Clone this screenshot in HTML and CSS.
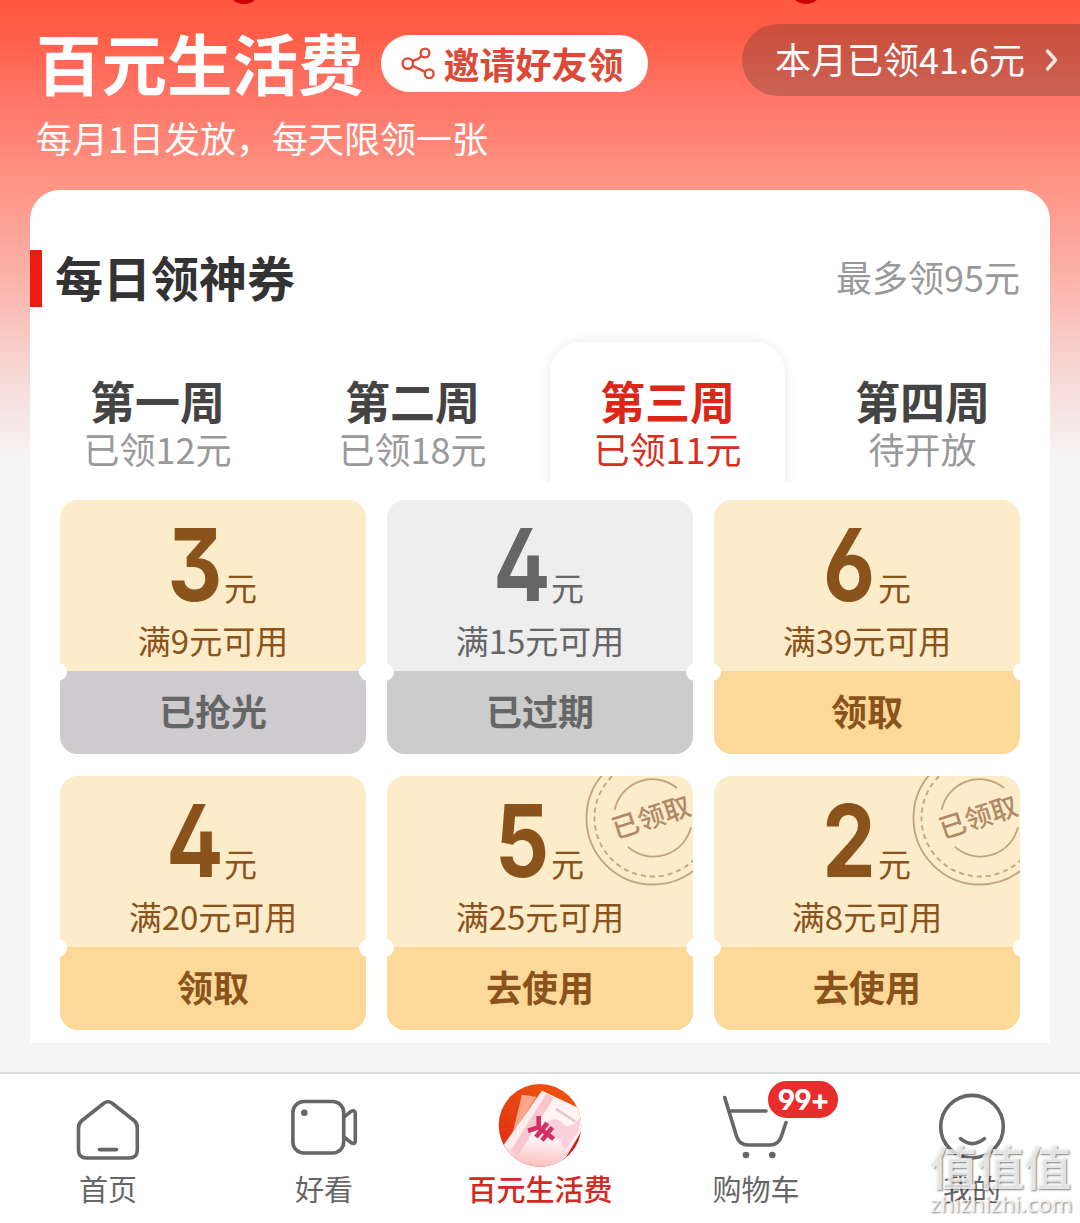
FILE: index.html
```html
<!DOCTYPE html>
<html lang="zh-CN">
<head>
<meta charset="utf-8">
<title>百元生活费</title>
<link rel="stylesheet" href="styles.css">
</head>
<body>
<svg class="defs" width="0" height="0" aria-hidden="true">
  <symbol id="stamp" viewBox="0 0 136 136">
    <g fill="none" stroke="#8a5a2e" stroke-opacity=".5" stroke-width="1.8">
      <circle cx="68" cy="68" r="66.5"/>
      <circle cx="68" cy="68" r="58.5" stroke-dasharray="5 4"/>
      <path d="M29.7 59.7A38.6 38.6 0 0 1 92 38"/>
      <path d="M42.7 96.7A38.6 38.6 0 0 0 106 77.3"/>
    </g>
  </symbol>
</svg>
<main class="page">
  <header class="hero">
    <span class="dot dot-left"></span>
    <span class="dot dot-right"></span>
    <div class="hero-main">
      <div class="hero-row">
        <h1 class="hero-title">百元生活费</h1>
        <a class="invite">
          <svg class="share" viewBox="0 0 34 32" width="34" height="32" fill="none" stroke="#dc4a37" stroke-width="2.4">
            <circle cx="6.8" cy="16.6" r="5.2"/><circle cx="24" cy="6" r="4.4"/><circle cx="28.2" cy="26.8" r="4.4"/>
            <path d="M11.8 13.9 17 12l4-3.4M11.8 18.8l12.4 6"/>
          </svg>
          <span>邀请好友领</span>
        </a>
      </div>
      <p class="hero-sub">每月1日发放，每天限领一张</p>
    </div>
    <a class="month">
      <span>本月已领41.6元</span>
      <svg viewBox="0 0 14 24" width="14" height="24" fill="none" stroke="#ffe9e4" stroke-width="3.4" stroke-linecap="round" stroke-linejoin="round"><path d="M2.5 3 10.5 12l-8 9"/></svg>
    </a>
  </header>

  <section class="card">
    <div class="card-head">
      <h2 class="card-title">每日领神券</h2>
      <span class="card-max">最多领95元</span>
    </div>
    <nav class="weeks">
      <a class="week"><b>第一周</b><span>已领12元</span></a>
      <a class="week"><b>第二周</b><span>已领18元</span></a>
      <a class="week active"><b>第三周</b><span>已领11元</span></a>
      <a class="week"><b>第四周</b><span>待开放</span></a>
    </nav>
    <div class="tickets">
      <article class="ticket soldout">
        <div class="face"><p class="amount"><b>3</b><span>元</span></p><p class="rule">满9元可用</p></div>
        <div class="action">已抢光</div>
      </article>
      <article class="ticket expired">
        <div class="face"><p class="amount"><b>4</b><span>元</span></p><p class="rule">满15元可用</p></div>
        <div class="action">已过期</div>
      </article>
      <article class="ticket">
        <div class="face"><p class="amount"><b>6</b><span>元</span></p><p class="rule">满39元可用</p></div>
        <div class="action">领取</div>
      </article>
      <article class="ticket">
        <div class="face"><p class="amount"><b>4</b><span>元</span></p><p class="rule">满20元可用</p></div>
        <div class="action">领取</div>
      </article>
      <article class="ticket">
        <div class="face"><p class="amount"><b>5</b><span>元</span></p><p class="rule">满25元可用</p></div>
        <div class="action">去使用</div>
        <div class="stamp"><svg width="136" height="136"><use href="#stamp"/></svg><span>已领取</span></div>
      </article>
      <article class="ticket">
        <div class="face"><p class="amount"><b>2</b><span>元</span></p><p class="rule">满8元可用</p></div>
        <div class="action">去使用</div>
        <div class="stamp"><svg width="136" height="136"><use href="#stamp"/></svg><span>已领取</span></div>
      </article>
    </div>
  </section>

  <nav class="tabbar">
    <a class="tab">
      <svg class="tab-icon" viewBox="0 0 120 84">
        <path d="M34 40.5 55.5 23.5Q60 20 64.500 23.500L86 40.500Q89.300 43.200 89.300 47.500V70Q89.300 78 81.300 78H38.500Q30.500 78 30.500 70V47.500Q30.500 43.200 34 40.500Z"/>
        <path d="M51.500 69.600H68.500"/>
      </svg>
      <span>首页</span>
    </a>
    <a class="tab">
      <svg class="tab-icon" viewBox="0 0 120 84">
        <rect x="28.900" y="21.500" width="50.800" height="51.500" rx="11"/>
        <circle class="solid" cx="40.300" cy="32.700" r="3.300"/>
        <path d="M80.500 36.700 87 31.300Q91.300 29.500 91.300 34V61Q91.300 64.500 88 63.200L80.500 57.500"/>
      </svg>
      <span>好看</span>
    </a>
    <a class="tab current">
      <svg class="tab-art" viewBox="0 0 120 84">
        <defs>
          <linearGradient id="ball" x1="0" y1="1" x2="1" y2="0"><stop offset="0" stop-color="#e21f16"/><stop offset=".45" stop-color="#e64410"/><stop offset="1" stop-color="#f0560c"/></linearGradient>
          <linearGradient id="paper" x1=".5" y1="0" x2=".4" y2="1"><stop offset="0" stop-color="#fff4f4"/><stop offset=".6" stop-color="#fff3f5"/><stop offset="1" stop-color="#fbb9b9"/></linearGradient>
          <clipPath id="disc"><circle cx="300" cy="196" r="124"/></clipPath>
        </defs>
        <g transform="translate(-40 -20) scale(.33333)">
          <g clip-path="url(#disc)">
            <rect x="170" y="66" width="260" height="260" fill="url(#ball)"/>
            <path d="M350 330 430 200V330Z" fill="#c8241b"/>
            <path d="M246 104 290 110 230 200 218 218Z" fill="#fba58c"/>
            <path d="M306 92 430 150 424 214 362 318 230 330 180 280Z" fill="url(#paper)"/>
            <path d="M306 92 322 102 214 270 190 256Z" fill="#fdecec"/>
            <path d="M320 100 341 114 232 290 212 272Z" fill="#f9c6ce"/>
            <path d="M318 188Q350 164 374 196 394 208 424 168L416 214 378 266Q362 262 362 240 330 236 318 188Z" fill="#fbd0dc"/>
            <path d="m348 147 58 38" stroke="#dfc9ce" stroke-width="8" fill="none"/>
          </g>
          <g fill="none" stroke="#d52e64" stroke-width="14">
            <path d="M296 168 296 202 264 212M296 202 341 237M322 189 288 231M337 202 306 241"/>
          </g>
        </g>
      </svg>
      <span>百元生活费</span>
    </a>
    <a class="tab">
      <svg class="tab-icon" viewBox="0 0 120 84">
        <path d="M28.700 17.500 40.500 56Q43 65 52.300 65H74Q82.500 65 85.300 56.500L90 42.500"/>
        <path d="M34.700 31H70"/>
        <circle class="solid" cx="50" cy="75" r="3.300"/><circle class="solid" cx="76.300" cy="75" r="3.300"/>
      </svg>
      <span>购物车</span>
      <em class="badge">99+</em>
    </a>
    <a class="tab">
      <svg class="tab-icon" viewBox="0 0 120 84">
        <circle cx="60" cy="46.700" r="31.300"/>
        <path d="M48.500 58.700Q60 68.500 72.500 58.700"/>
      </svg>
      <span>我的</span>
    </a>
  </nav>
  <div class="watermark"><b>值值值</b><span>zhizhizhi.com</span></div>
</main>
</body>
</html>
```
FILE: styles.css
```css
* { box-sizing: border-box; margin: 0; padding: 0; }
body {
  width: 1080px;
  font-family: "Noto Sans CJK SC", "Noto Sans", sans-serif;
  background: #f5f5f5;
}
.defs { position: absolute; }
.page {
  position: relative;
  display: flex;
  flex-direction: column;
  width: 1080px;
  height: 1223px;
  overflow: hidden;
  background: linear-gradient(180deg, #ff5840 0, #ff5c45 30px, #ff7364 90px, #ff9384 180px, #fbb3aa 280px, #f7dad7 380px, #f5f5f5 460px);
}

/* header */
.hero {
  display: flex;
  justify-content: space-between;
  align-items: flex-start;
  height: 190px;
  padding: 24px 0 0 36px;
  color: #fff;
}
.dot {
  position: absolute;
  top: -30px;
  width: 34px;
  height: 34px;
  border-radius: 50%;
  background: #c90202;
}
.dot-left { left: 227px; }
.dot-right { left: 789px; }
.hero-row { display: flex; align-items: center; gap: 17px; height: 79px; }
.hero-title { font-size: 65.5px; line-height: 78px; padding-bottom: 4px; font-weight: 700; }
.invite {
  display: flex;
  align-items: center;
  gap: 9px;
  width: 267px;
  height: 57px;
  padding: 0 0 2px 20px;
  border-radius: 29px;
  background: #fff;
  color: #dc4a37;
  font-size: 36px;
  line-height: 54px;
  font-weight: 700;
}
.hero-sub { font-size: 36px; line-height: 68px; }
.month {
  display: flex;
  align-items: center;
  gap: 20px;
  width: 338px;
  height: 72px;
  padding-left: 33px;
  border-radius: 36px 0 0 36px;
  background: rgba(70, 50, 40, .28);
  font-size: 36px;
  line-height: 68px;
}
.month span { padding-bottom: 4px; }

/* coupon card */
.card {
  width: 1020px;
  height: 853px;
  margin-left: 30px;
  padding-top: 60px;
  border-radius: 30px 30px 0 0;
  background: #fff;
}
.card-head {
  display: flex;
  justify-content: space-between;
  align-items: center;
  height: 57px;
  padding: 0 30px 0 13px;
  border-left: 12px solid #ed1c0f;
}
.card-title { font-size: 48px; line-height: 53px; padding-bottom: 4px; font-weight: 700; color: #333; }
.card-max { font-size: 36px; line-height: 50px; padding-bottom: 6px; color: #999; }
.weeks {
  display: grid;
  grid-template-columns: repeat(4, 255px);
  height: 176px;
  padding-top: 28px;
  overflow: hidden;
}
.week {
  display: flex;
  flex-direction: column;
  align-items: center;
  width: 235px;
  height: 148px;
  margin: 7px 10px 0;
  padding-top: 30px;
  color: #999;
}
.week b { font-size: 45px; line-height: 58px; font-weight: 700; color: #444; }
.week span { font-size: 36px; line-height: 36px; }
.week.active {
  border-radius: 30px 30px 0 0;
  box-shadow: 0 0 12px rgba(0, 0, 0, .09);
  color: #d92d20;
}
.week.active b { color: #dc2617; }
.tickets {
  display: grid;
  grid-template-columns: repeat(3, 306px);
  gap: 22px 21px;
  padding: 16.500px 30px 0;
}
.ticket {
  position: relative;
  display: flex;
  flex-direction: column;
  height: 254px;
  border-radius: 18px;
  overflow: hidden;
  background: #fdecca;
  color: #8a531c;
}
.ticket::before, .ticket::after {
  content: "";
  position: absolute;
  top: 163px;
  width: 18px;
  height: 18px;
  border-radius: 50%;
  background: #fff;
}
.ticket::before { left: -11px; }
.ticket::after { right: -11px; }
.face { display: flex; flex-direction: column; align-items: center; height: 171px; }
.amount { display: flex; align-items: baseline; justify-content: center; height: 118px; line-height: 128px; }
.amount b {
  width: 55px;
  font-family: Inter, "Noto Sans CJK SC", sans-serif;
  font-feature-settings: "cv02", "cv03", "cv04", "cv09";
  font-size: 101px;
  font-weight: 700;
  display: flex;
  justify-content: center;
  transform: translateX(-1.500px) scaleX(.84);
}
.amount span { font-size: 33px; }
.rule { font-size: 33px; line-height: 44px; }
.action {
  height: 83px;
  background: #fcd998;
  font-size: 36px;
  line-height: 78px;
  font-weight: 700;
  text-align: center;
}
.soldout .action { background: #cdcbce; color: #666; }
.expired { background: #eee; color: #666; }
.expired .action { background: #ccc; }
.stamp {
  position: absolute;
  left: 198px;
  top: -26px;
  width: 136px;
  height: 136px;
}
.stamp svg { display: block; }
.stamp span {
  position: absolute;
  inset: 0 3px 0 0;
  font-size: 27px;
  line-height: 132px;
  font-weight: 500;
  text-align: center;
  color: #b08a66;
  transform: rotate(-18deg);
}

/* bottom tab bar */
.tabbar {
  display: grid;
  grid-template-columns: repeat(5, 216px);
  height: 151px;
  margin-top: 29px;
  padding-top: 6px;
  border-top: 2px solid #dcdcdc;
  background: #fff;
}
.tab {
  position: relative;
  display: flex;
  flex-direction: column;
  align-items: center;
  gap: 4px;
  color: #666;
  font-size: 29px;
  line-height: 40px;
}
.tab.current { color: #d5281e; font-weight: 500; }
.tab svg { display: block; width: 120px; height: 84px; overflow: visible; }
.tab-icon { fill: none; stroke: #666; stroke-width: 3.6; stroke-linecap: round; stroke-linejoin: round; }
.tab-icon .solid { fill: #666; stroke: none; }
.badge {
  position: absolute;
  left: 118px;
  top: -1px;
  width: 74px;
  height: 41px;
  border: 2px solid #fff;
  border-radius: 21px;
  background: #e92c2c;
  color: #fff;
  font: 700 29px/37px Inter, sans-serif;
  font-feature-settings: "cv04";
  letter-spacing: -1.500px;
  text-align: center;
}
.watermark {
  position: absolute;
  left: 930px;
  top: 1140px;
  display: flex;
  flex-direction: column;
  color: rgba(255, 255, 255, .8);
  text-shadow: 1px 1px 2px rgba(0, 0, 0, .5);
}
.watermark b { font-size: 47px; line-height: 50px; font-weight: 700; }
.watermark span { font: 22.500px/28px "Noto Sans", sans-serif; }
```
